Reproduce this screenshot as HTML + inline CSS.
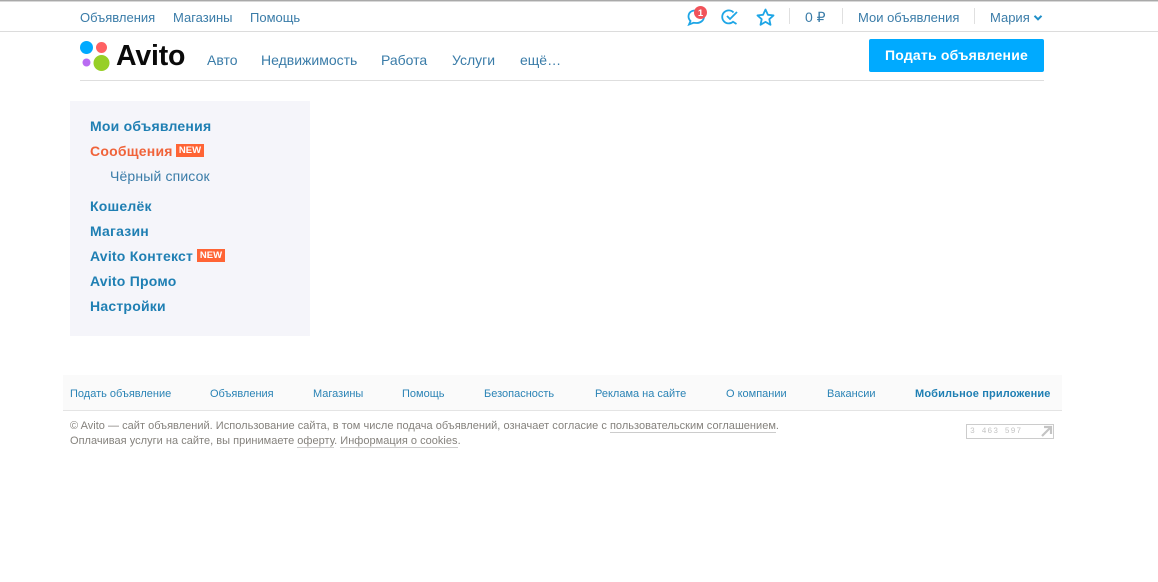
<!DOCTYPE html>
<html lang="ru"><head><meta charset="utf-8"><title>Avito</title>
<style>
html,body{margin:0;padding:0;background:#fff;width:1158px;height:582px;overflow:hidden}
body{position:relative;font-family:"Liberation Sans",Arial,sans-serif;color:#0f7cb8}
.t{position:absolute;white-space:nowrap}
.n{font-size:14px;line-height:16px;color:#3a7ca8}
.m{font-size:13px;line-height:16px;color:#3a7ca8}
.s{font-size:14px;line-height:18px;font-weight:bold;color:#1f7fb3;letter-spacing:.22px}
.f{font-size:11px;line-height:14px;color:#2a83b5}
.c{font-size:11px;line-height:14px;color:#85827d;letter-spacing:.02px}
.c u{text-decoration:none;border-bottom:1px solid #ccc}
.b{position:absolute;background:#ff6435;color:#fff;font-size:9.500px;font-weight:bold;line-height:14px;height:13px;width:28px;text-align:center;overflow:hidden}
.r{position:absolute}
</style></head><body>
<div class="r" style="left:0;top:0;width:1158px;height:1px;background:#a9a9a9"></div>
<div class="r" style="left:0;top:1px;width:1158px;height:1px;background:#d8d8d8"></div>
<div class="r" style="left:0;top:31px;width:1158px;height:1px;background:#dcdcdc"></div>
<div class="t m" style="left:80px;top:10px">Объявления</div>
<div class="t m" style="left:173px;top:10px">Магазины</div>
<div class="t m" style="left:250px;top:10px">Помощь</div>

<svg class="r" style="left:684px;top:3px" width="100" height="24" viewBox="0 0 100 24" fill="none">
<path d="M11 7.500C7 7.500 4.500 10 4.500 13.500C4.500 15.500 5.500 17 6.500 18L5 21.500L9.500 19.800C10.500 20 11.500 20 12.500 20C16.500 20 20 17.500 20 13.500" stroke="#1ea6e6" stroke-width="1.800"/>
<circle cx="16.500" cy="9.500" r="6.500" fill="#f1535a"/>
<text x="16.500" y="13" font-family="Liberation Sans" font-size="9.500" font-weight="bold" fill="#fff" text-anchor="middle">1</text>
<path d="M49.500 9.500A6.500 6.500 0 1 0 49 18.800L52.500 21" stroke="#1ea6e6" stroke-width="1.800"/>
<path d="M43 13L46 16L53 9" stroke="#1ea6e6" stroke-width="1.800"/>
<path d="M81.500 6.500L83.900 11.800L89.500 12.400L85.300 16.200L86.500 21.800L81.500 18.900L76.500 21.800L77.700 16.200L73.500 12.400L79.100 11.800Z" stroke="#1ea6e6" stroke-width="1.800" stroke-linejoin="round"/>
</svg>
<div class="r" style="left:789px;top:8px;width:1px;height:16px;background:#e0e0e0"></div>
<div class="t n" style="left:805px;top:9px">0 ₽</div>
<div class="r" style="left:842px;top:8px;width:1px;height:16px;background:#e0e0e0"></div>
<div class="t m" style="left:858px;top:10px">Мои объявления</div>
<div class="r" style="left:974px;top:8px;width:1px;height:16px;background:#e0e0e0"></div>
<div class="t m" style="left:990px;top:10px">Мария</div>
<svg class="r" style="left:1033px;top:14px" width="10" height="8" viewBox="0 0 10 8" fill="none"><path d="M1.500 1.800L5 5.300L8.500 1.800" stroke="#1f8fc8" stroke-width="2"/></svg>

<svg class="r" style="left:80px;top:40px" width="32" height="32"><circle cx="6.500" cy="7.500" r="6.500" fill="#0af"/><circle cx="21.500" cy="7.500" r="5.500" fill="#ff6163"/><circle cx="6.500" cy="22.500" r="4" fill="#b96bf2"/><circle cx="21.500" cy="23" r="8" fill="#97cf26"/></svg>
<div class="t" style="left:116px;top:39px;font-size:28.500px;line-height:34px;font-weight:bold;color:#0a0a0a;letter-spacing:-.2px">Avito</div>

<div class="t n" style="left:207px;top:52px">Авто</div>
<div class="t n" style="left:261px;top:52px">Недвижимость</div>
<div class="t n" style="left:381px;top:52px">Работа</div>
<div class="t n" style="left:452px;top:52px">Услуги</div>
<div class="t n" style="left:520px;top:52px">ещё…</div>
<div class="t" style="left:869px;top:39px;width:175px;height:33px;background:#0af;border-radius:2px;color:#fff;font-size:14px;font-weight:bold;line-height:33px;text-align:center;letter-spacing:.2px">Подать объявление</div>
<div class="r" style="left:80px;top:80px;width:964px;height:1px;background:#dedede"></div>

<div class="r" style="left:70px;top:101px;width:240px;height:235px;background:#f5f5fa"></div>
<div class="t s" style="left:90px;top:117px">Мои объявления</div>
<div class="t s" style="left:90px;top:142px;color:#f0633a">Сообщения</div>
<div class="b" style="left:176px;top:144px">NEW</div>
<div class="t n" style="left:110px;top:168px;letter-spacing:.15px">Чёрный список</div>
<div class="t s" style="left:90px;top:197px">Кошелёк</div>
<div class="t s" style="left:90px;top:222px">Магазин</div>
<div class="t s" style="left:90px;top:247px">Avito Контекст</div>
<div class="b" style="left:197px;top:249px">NEW</div>
<div class="t s" style="left:90px;top:272px">Avito Промо</div>
<div class="t s" style="left:90px;top:297px">Настройки</div>

<div class="r" style="left:63px;top:375px;width:999px;height:35px;background:#fafafa"></div>
<div class="r" style="left:63px;top:410px;width:999px;height:1px;background:#e4e4e4"></div>
<div class="t f" style="left:70px;top:387px">Подать объявление</div>
<div class="t f" style="left:210px;top:387px">Объявления</div>
<div class="t f" style="left:313px;top:387px">Магазины</div>
<div class="t f" style="left:402px;top:387px">Помощь</div>
<div class="t f" style="left:484px;top:387px">Безопасность</div>
<div class="t f" style="left:595px;top:387px">Реклама на сайте</div>
<div class="t f" style="left:726px;top:387px">О компании</div>
<div class="t f" style="left:827px;top:387px">Вакансии</div>
<div class="t f" style="left:915px;top:387px;font-weight:bold;color:#1f7fb3;letter-spacing:.15px">Мобильное приложение</div>
<div class="t c" style="left:70px;top:419px">© Avito — сайт объявлений. Использование сайта, в том числе подача объявлений, означает согласие с <u>пользовательским соглашением</u>.</div>
<div class="t c" style="left:70px;top:434px">Оплачивая услуги на сайте, вы принимаете <u>оферту</u>. <u>Информация о cookies</u>.</div>

<div class="r" style="left:966px;top:424px;width:86px;height:13px;border:1px solid #ccc"></div>
<div class="t" style="left:970px;top:427px;font-family:'Liberation Mono',monospace;font-size:8px;line-height:10px;color:#c4c4c4;letter-spacing:1px">3 463 597</div>
<svg class="r" style="left:1040px;top:425px" width="13" height="12" fill="none"><path d="M2 11L11 2M4 2H11V9" stroke="#c4c4c4" stroke-width="2.200"/></svg>
</body></html>
